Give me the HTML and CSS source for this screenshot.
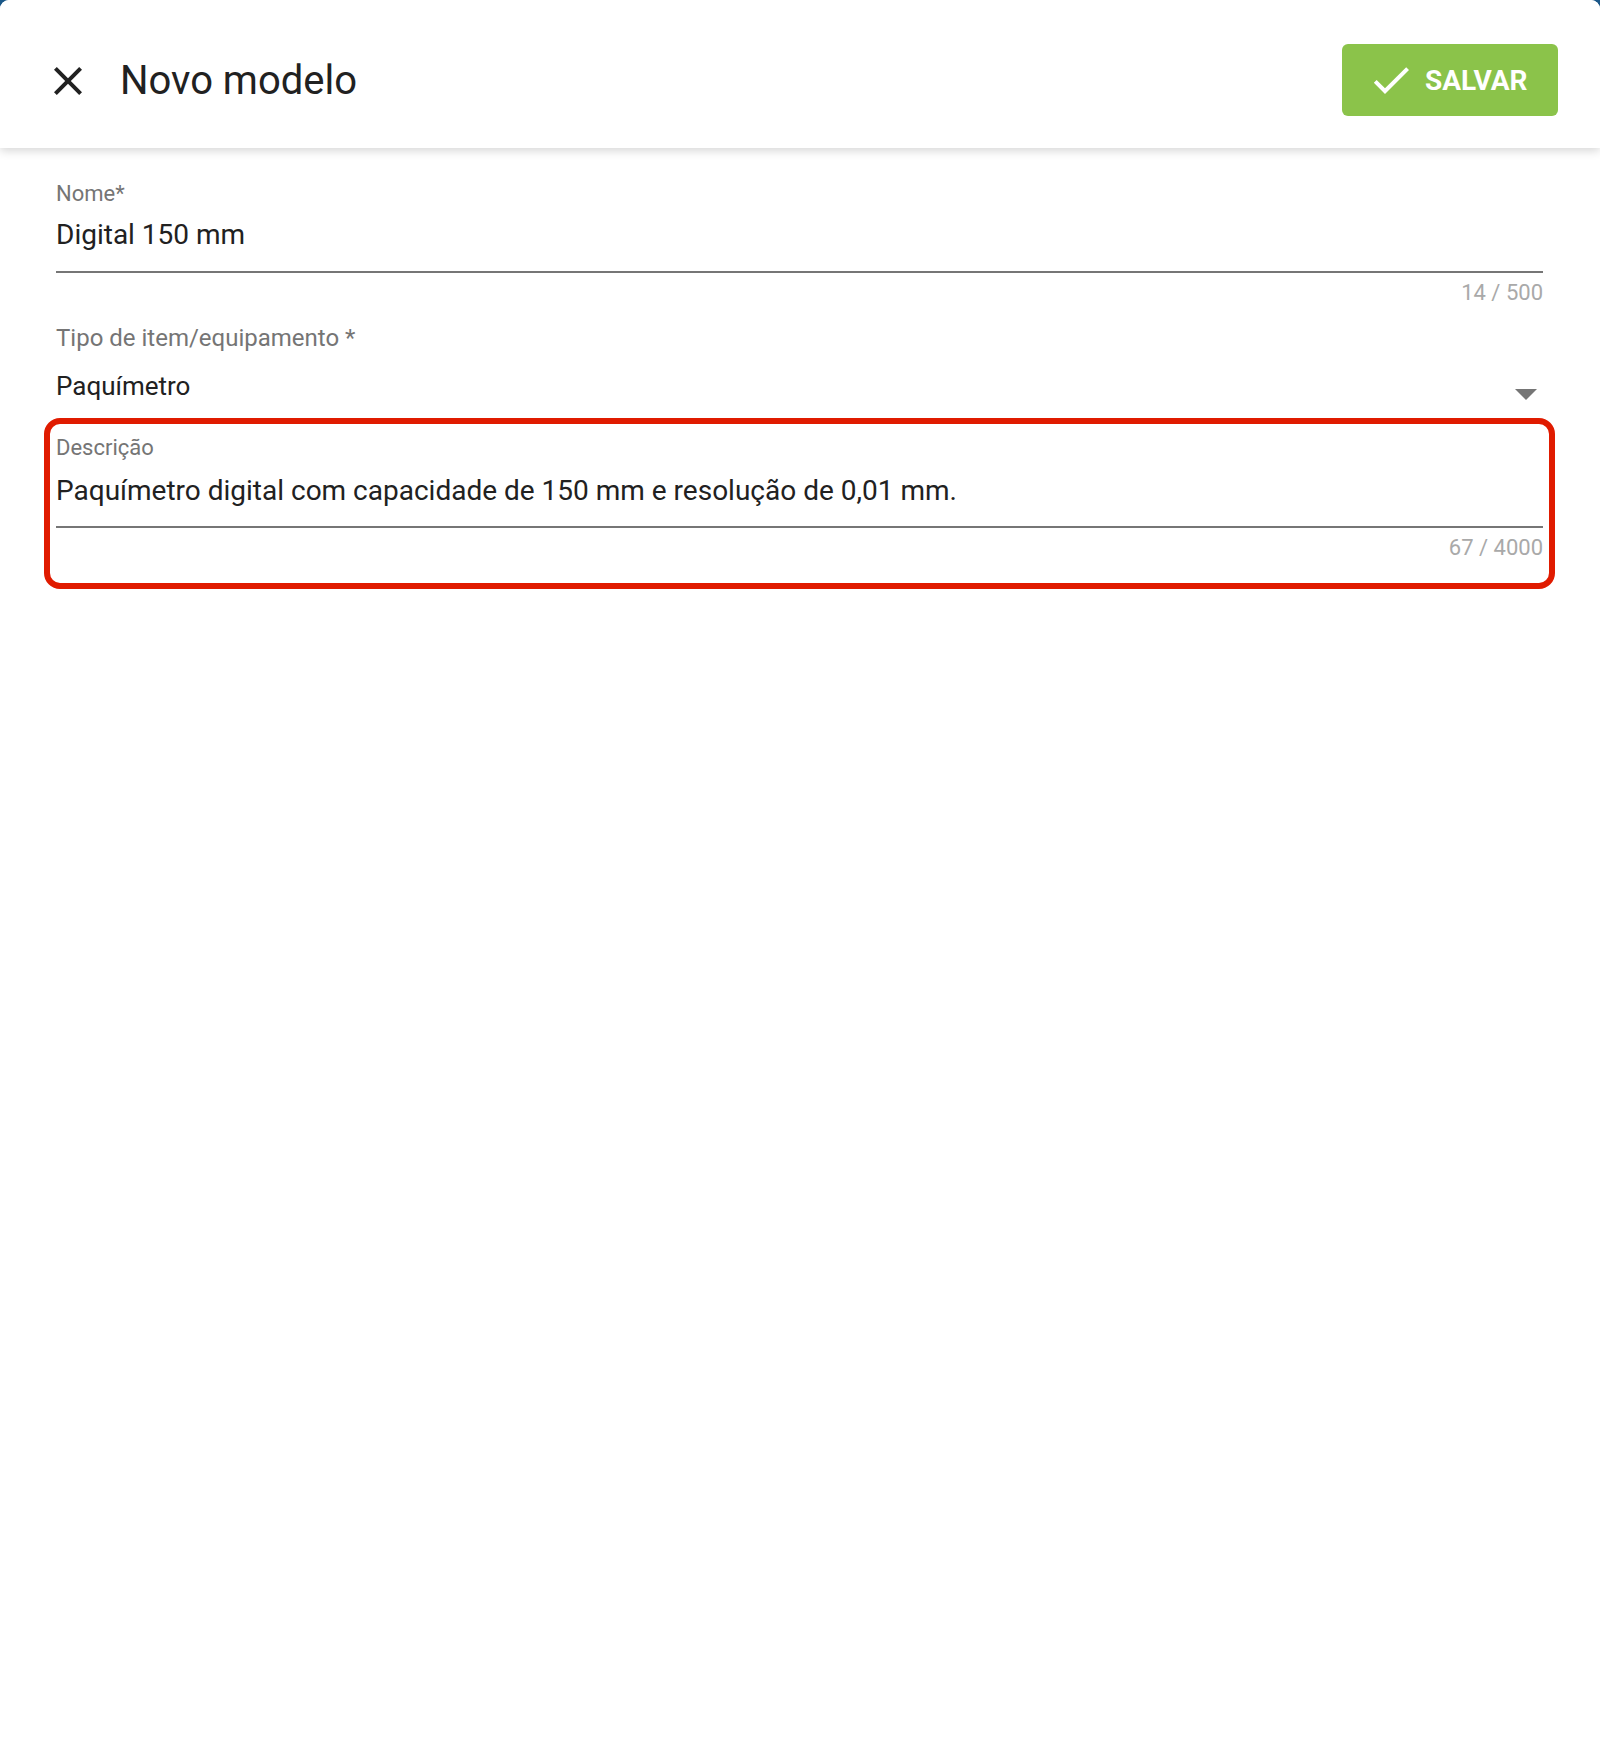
FILE: index.html
```html
<!DOCTYPE html>
<html lang="pt-BR">
<head>
<meta charset="utf-8">
<title>Novo modelo</title>
<link rel="stylesheet" href="styles.css">
</head>
<body>
<div class="dialog">
  <header class="toolbar">
    <button class="icon-btn" aria-label="Fechar">
      <svg viewBox="0 0 24 24" width="48" height="48"><path fill="#212121" d="M19 6.41L17.59 5 12 10.59 6.41 5 5 6.41 10.59 12 5 17.59 6.41 19 12 13.41 17.59 19 19 17.59 13.41 12z"/></svg>
    </button>
    <h1 class="title">Novo modelo</h1>
    <div class="spacer"></div>
    <button class="save-btn">
      <svg viewBox="0 0 24 24" width="48" height="48"><path fill="#ffffff" d="M9 16.17L4.83 12l-1.42 1.41L9 19 21 7l-1.41-1.41z"/></svg>
      <span>SALVAR</span>
    </button>
  </header>

  <main class="form">
    <div class="field">
      <div class="label label-float">Nome*</div>
      <div class="value input-row">Digital 150 mm</div>
      <div class="hint">14 / 500</div>
    </div>

    <div class="field select-field">
      <div class="label label-select">Tipo de item/equipamento *</div>
      <div class="value select-row">
        <span>Paquímetro</span>
        <span class="arrow"></span>
      </div>
    </div>

    <div class="field highlight">
      <div class="label label-float label-desc">Descrição</div>
      <div class="value input-row desc-row">Paquímetro digital com capacidade de 150 mm e resolução de 0,01 mm.</div>
      <div class="hint">67 / 4000</div>
    </div>
  </main>
</div>
</body>
</html>
```

FILE: styles.css
```css
* { box-sizing: border-box; }

html, body {
  margin: 0;
  padding: 0;
}

body {
  background: #1b5a8c;
  font-family: Roboto, "Noto Sans", "Liberation Sans", sans-serif;
  color: #212121;
}

.dialog {
  background: #ffffff;
  min-height: 1744px;
  border-radius: 9px 9px 0 0;
}

.toolbar {
  height: 148px;
  padding: 14px 42px 0 44px;
  display: flex;
  align-items: center;
  background: #ffffff;
  border-radius: 9px 9px 0 0;
  box-shadow: 0 3px 10px rgba(0, 0, 0, 0.16);
  position: relative;
  z-index: 1;
}

.icon-btn {
  width: 48px;
  height: 48px;
  padding: 0;
  margin: 0;
  border: 0;
  background: transparent;
  display: flex;
}

.title {
  margin: 0 0 0 28px;
  font-size: 40px;
  font-weight: 400;
  color: #212121;
  line-height: 48px;
}

.spacer { flex: 1; }

.save-btn {
  height: 72px;
  width: 216px;
  margin-top: -2px;
  border: 0;
  border-radius: 6px;
  background: #8bc34a;
  color: #ffffff;
  display: flex;
  align-items: center;
  padding: 0 0 0 25px;
  font-family: Roboto, "Noto Sans", "Liberation Sans", sans-serif;
  font-size: 28px;
  font-weight: 700;
  letter-spacing: 0;
}

.save-btn span {
  margin-left: 10px;
}

.form {
  padding: 31px 57px 0 56px;
}

.field {
  display: flex;
  flex-direction: column;
}

.label {
  color: #757575;
  font-size: 22px;
  line-height: 30px;
}

.label-select {
  font-size: 24px;
  margin-top: 15px;
}

.value {
  font-size: 28px;
  line-height: 40px;
  color: #212121;
}

.input-row {
  margin-top: 6px;
  padding-bottom: 16px;
  border-bottom: 2px solid #767676;
}

.hint {
  align-self: flex-end;
  margin-top: 5px;
  font-size: 22px;
  line-height: 30px;
  color: #a9a9a9;
}

.select-row {
  margin-top: 13px;
  font-size: 26px;
  display: flex;
  justify-content: space-between;
}

.arrow {
  width: 0;
  height: 0;
  border-left: 11.5px solid transparent;
  border-right: 11.5px solid transparent;
  border-top: 11px solid #757575;
  margin: 23px 6px 0 0;
}

.highlight {
  margin: 12px -12px 0 -12px;
  padding: 9px 6px 20px 6px;
  border: 6px solid #e01b00;
  border-radius: 16px;
}

.desc-row {
  margin-top: 8px;
  padding-bottom: 15px;
}
```
